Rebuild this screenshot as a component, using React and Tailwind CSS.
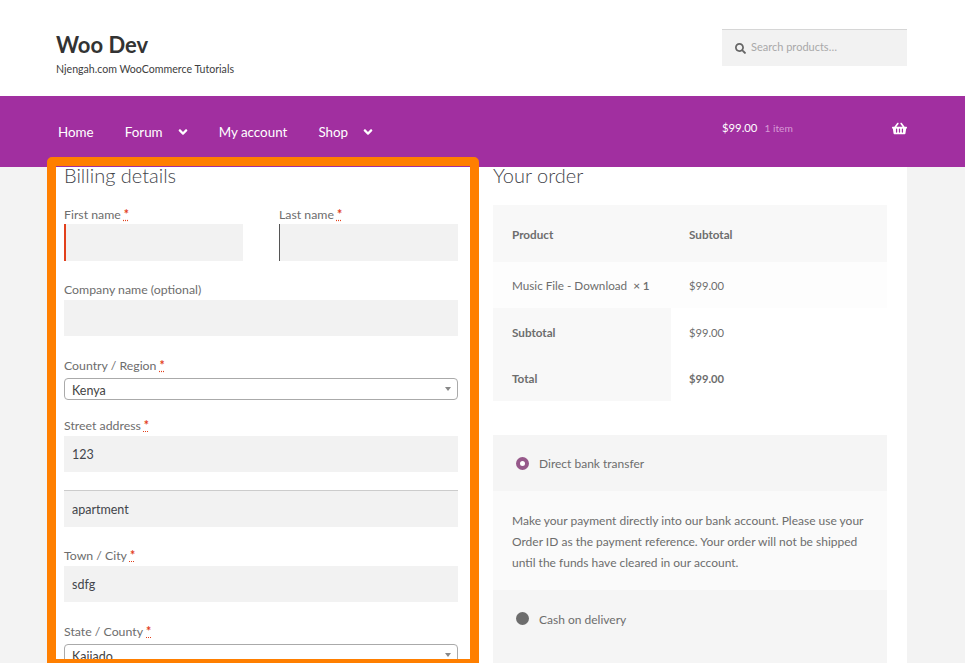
import React from "react";
import { FaSearch, FaShoppingBasket, FaAngleDown } from "react-icons/fa";

const Req = () => (
  <span className="text-[#e2401c] underline decoration-dotted ml-[3px] font-bold">*</span>
);

const Label = ({ children, required, className = "" }) => (
  <label className={`block text-[12.3px] leading-[20px] h-[20px] text-[#6d6d6d] ${className}`}>
    {children}
    {required && <Req />}
  </label>
);

const inputCls =
  "block w-full bg-[#f2f2f2] px-2 text-[12.5px] text-[#43454b] outline-none";

const Select = ({ value, className = "" }) => (
  <div
    className={`flex items-center justify-between w-full h-[22px] bg-white border border-[#aaaaaa] rounded pl-[7px] pr-[6px] text-[12.5px] text-[#444444] ${className}`}
  >
    <span className="pt-[5px]">{value}</span>
    <span className="w-0 h-0 border-x-[3.5px] border-x-transparent border-t-[4px] border-t-[#888888]" />
  </div>
);

const NavItem = ({ children, caret, className = "" }) => (
  <a className={`flex items-center text-[13.4px] text-white ${className}`}>
    {children}
    {caret && <FaAngleDown className="ml-[13px] text-[14px] text-white" />}
  </a>
);

const App = () => {
  return (
    <div className="relative w-[965px] h-[663px] overflow-hidden bg-[#f3f3f3] font-['Lato','Liberation_Sans',sans-serif]">
      <header className="h-[96px] bg-white flex justify-between pl-[56px] pr-[58px]">
        <div className="pt-[30px]">
          <h1 className="text-[22px] leading-[30px] font-bold text-[#333333]">Woo Dev</h1>
          <p className="mt-[1px] text-[10.6px] leading-[16px] text-[#404040]">
            Njengah.com WooCommerce Tutorials
          </p>
        </div>
        <div className="mt-[29px] w-[185px] h-[37px] bg-[#f2f2f2] border-t border-[#d6d6d6] flex items-center pl-[13px]">
          <FaSearch className="text-[11px] text-[#666666]" />
          <span className="ml-[5px] -mt-[1px] text-[11px] text-[#a9a9a9]">Search products…</span>
        </div>
      </header>

      <nav className="h-[71px] bg-[#a12fa0] flex items-center justify-between pl-[58px] pr-[58px]">
        <div className="flex items-center gap-[31px] pt-[2px]">
          <NavItem>Home</NavItem>
          <NavItem caret className="-mr-[2px]">Forum</NavItem>
          <NavItem>My account</NavItem>
          <NavItem caret>Shop</NavItem>
        </div>
        <div className="flex items-center w-[185px] justify-between -mt-[6px]">
          <div className="flex items-baseline">
            <span className="text-[11.3px] text-white">$99.00</span>
            <span className="ml-[7px] text-[10.2px] text-[#d79ad6]">1 item</span>
          </div>
          <FaShoppingBasket className="text-[15px] text-white -mt-[1px]" />
        </div>
      </nav>

      <main className="ml-[47px] w-[860px] h-[496px] bg-white flex pl-[17px] gap-[35px]">
        <section className="w-[394px] shrink-0">
          <h3 className="-mt-[2px] text-[20px] leading-[20px] font-light text-[#43454b]">Billing details</h3>
          <div className="mt-[19px] flex gap-[36px]">
            <div className="w-[179px]">
              <Label required className="pt-[1px]">First name</Label>
              <input className={`${inputCls} h-[37px] border-l-2 border-[#e2401c]`} />
            </div>
            <div className="w-[179px]">
              <Label required className="pt-[1px]">Last name</Label>
              <input className={`${inputCls} h-[37px] border-l border-[#555555]`} />
            </div>
          </div>
          <div className="mt-[19px]">
            <Label>Company name (optional)</Label>
            <input className={`${inputCls} h-[36px]`} />
          </div>
          <div className="mt-[19px]">
            <Label required className="pt-[1px]">Country / Region</Label>
            <Select value="Kenya" className="mt-[3px]" />
          </div>
          <div className="mt-[16px]">
            <Label required>Street address</Label>
            <input className={`${inputCls} h-[36px]`} defaultValue="123" />
            <input
              className={`${inputCls} h-[37px] mt-[18px] border-t border-[#cccccc]`}
              defaultValue="apartment"
            />
          </div>
          <div className="mt-[19px]">
            <Label required>Town / City</Label>
            <input className={`${inputCls} h-[36px]`} defaultValue="sdfg" />
          </div>
          <div className="mt-[20px]">
            <Label required>State / County</Label>
            <Select value="Kaijado" className="mt-[2px]" />
          </div>
        </section>

        <section className="w-[394px] shrink-0">
          <h3 className="-mt-[2px] text-[20px] leading-[20px] font-light text-[#43454b]">Your order</h3>
          <div className="mt-[20px] text-[11.7px] text-[#6d6d6d]">
            <div className="h-[57px] bg-[#f8f8f8] flex items-center font-bold pt-[2px]">
              <span className="w-[178px] pl-[19px]">Product</span>
              <span className="pl-[18px]">Subtotal</span>
            </div>
            <div className="h-[46px] bg-[#fdfdfd] flex items-center pt-[2px]">
              <span className="w-[178px] pl-[19px] whitespace-nowrap">
                Music File - Download&nbsp; <b className="font-semibold">× 1</b>
              </span>
              <span className="pl-[18px] text-[11.2px]">$99.00</span>
            </div>
            <div className="h-[47px] flex items-center">
              <span className="w-[178px] h-full bg-[#f8f8f8] pl-[19px] pt-[2px] flex items-center font-bold">Subtotal</span>
              <span className="pl-[18px] mt-[3px] text-[11.2px]">$99.00</span>
            </div>
            <div className="h-[46px] flex items-center">
              <span className="w-[178px] h-full bg-[#f8f8f8] pl-[19px] pt-[2px] flex items-center font-bold">Total</span>
              <span className="pl-[18px] mt-[2px] text-[11.2px] font-bold">$99.00</span>
            </div>
          </div>

          <div className="mt-[34px] text-[12px] text-[#6d6d6d]">
            <div className="h-[56px] bg-[#f5f5f5] flex items-center pl-[23px]">
              <span className="w-[13px] h-[13px] rounded-full border-[4.5px] border-[#96588a] bg-white" />
              <span className="ml-[10px] mt-[2px]">Direct bank transfer</span>
            </div>
            <div className="h-[99px] bg-[#fafafa] pl-[19px] pr-[12px] pt-[19px] leading-[21px]">
              Make your payment directly into our bank account. Please use your Order ID as the payment
              reference. Your order will not be shipped until the funds have cleared in our account.
            </div>
            <div className="h-[80px] bg-[#f5f5f5] flex items-start pl-[23px] pt-[22px]">
              <span className="w-[13px] h-[13px] rounded-full bg-[#6d6d6d]" />
              <span className="ml-[10px] leading-[15px]">Cash on delivery</span>
            </div>
          </div>
        </section>
      </main>

      <div className="absolute left-[47px] top-[157px] w-[432px] h-[511px] border-[9px] border-[#ff7f00] rounded-[5px] pointer-events-none" />
    </div>
  );
};

export default App;
